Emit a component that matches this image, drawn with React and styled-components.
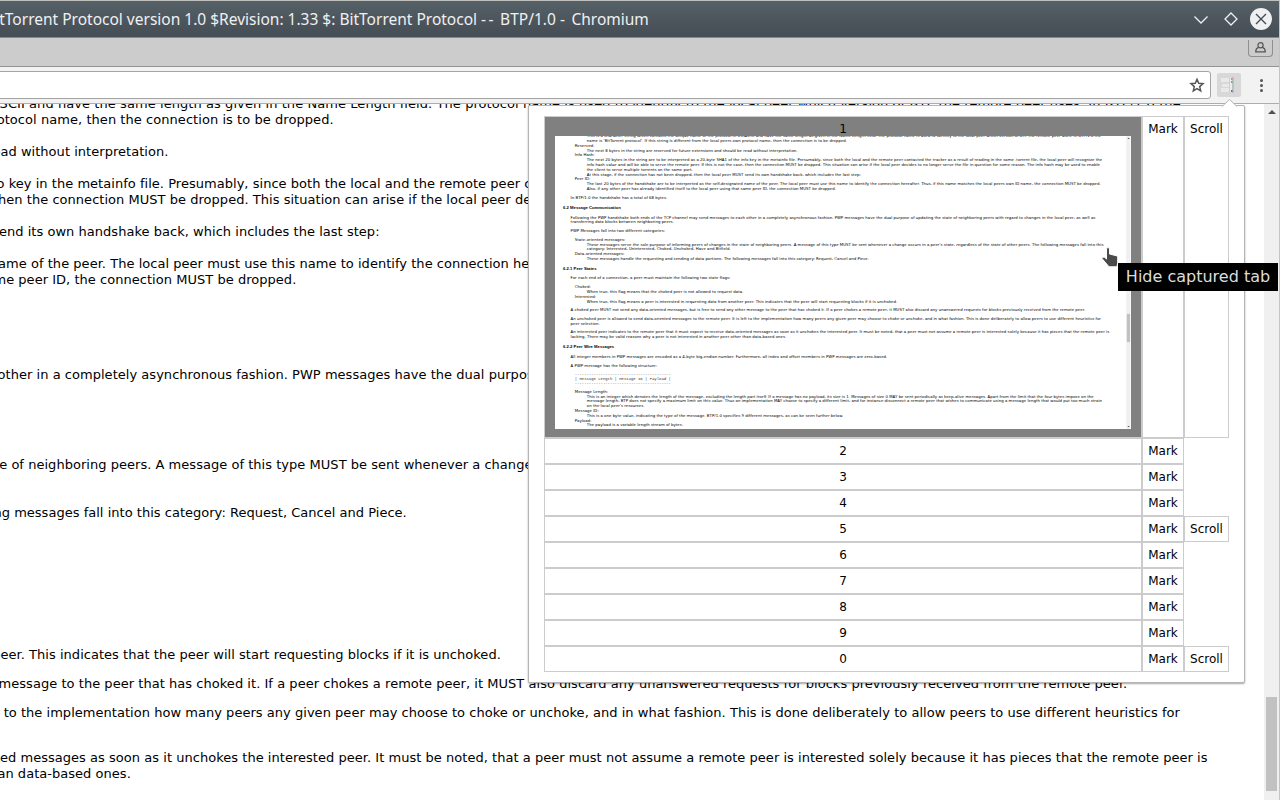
import React from "react";
import styled, { createGlobalStyle } from "styled-components";

const Global = createGlobalStyle`
  body { margin: 0; overflow: hidden; background: #fff; }
  * { box-sizing: border-box; }
`;

/* The desktop shows the right part of a 1920px wide browser window. */
const Screen = styled.div`
  width: 1280px;
  height: 800px;
  overflow: hidden;
  display: flex;
  justify-content: flex-end;
  align-items: flex-start;
  position: relative;
  font-family: "DejaVu Sans", sans-serif;
  color: #000;
`;
const Window = styled.div`
  flex: none;
  width: 1920px;
  height: 1080px;
  display: flex;
  flex-direction: column;
  border-top: 1px solid #c0c0be;
  border-right: 1px solid #c4c4c4;
`;
const TitleBar = styled.header`
  flex: none;
  height: 37px;
  display: flex;
  align-items: center;
  justify-content: center;
  position: relative;
  padding-right: 5px;
  background: linear-gradient(#566067, #454d54);
  border-bottom: 1px solid #3f9fd8;
  color: #eff0f1;
  font: 15.5px "Noto Sans", sans-serif;
  white-space: pre;
`;
const Dashes = styled.span`
  letter-spacing: 2.5px;
`;
const WindowButtons = styled.div`
  position: absolute;
  right: 6px;
  top: 6px;
  display: flex;
  gap: 6px;
`;
const TabStrip = styled.div`
  flex: none;
  height: 29px;
  background: #ccc;
  border-bottom: 1px solid #949494;
  display: flex;
  justify-content: flex-end;
  align-items: flex-start;
  padding: 2px 6px 0 0;
`;
const ProfileButton = styled.div`
  width: 25px;
  height: 17px;
  border: 1px solid #8f8f8f;
  border-top: 0;
  border-radius: 0 0 4px 4px;
  display: flex;
  justify-content: center;
  padding-top: 1px;
`;
const Toolbar = styled.div`
  flex: none;
  height: 37px;
  background: #f2f2f2;
  border-bottom: 1px solid #adadad;
  display: flex;
  align-items: flex-start;
  padding: 4px 11px 0 0;
`;
const AddressField = styled.div`
  flex: 1;
  height: 28px;
  background: #fff;
  border: 1px solid #a4a4a4;
  border-radius: 3px;
  display: flex;
  justify-content: flex-end;
  align-items: center;
  padding-right: 5px;
`;
const ExtensionButton = styled.div`
  width: 24px;
  height: 24px;
  margin: 2px 13px 0 6px;
  background: #d8d8d8;
  border-radius: 2px;
`;
const MenuDots = styled.div`
  width: 14px;
  height: 28px;
  display: flex;
  flex-direction: column;
  align-items: center;
  justify-content: center;
  gap: 2px;
  &::before, &::after { content: ""; }
  &::before, &::after, i { width: 3px; height: 3px; border-radius: 50%; background: #555; }
`;

const PageView = styled.div`
  flex: none;
  width: 1919px;
  height: 976px;
  display: flex;
  overflow: hidden;
  background: #fff;
`;
const Article = styled.div`
  flex: 1;
  min-width: 0;
  margin-top: -8px;
  font: 13px/16px "DejaVu Sans", sans-serif;
  letter-spacing: 0.033px;
  white-space: nowrap;
  p { margin: 13px 0 13px 52px; }
  dl { margin: 13px 0 13px 66px; }
  dl:first-child { margin-top: 0; }
  dd { margin-left: 40px; }
  pre { font: 13px/15px "Liberation Mono", monospace; letter-spacing: 0; margin: 13px 0 13px 66px; color: #333; }
`;
const Heading = styled.h3`
  font: bold 14px/16px "Liberation Sans", sans-serif;
  letter-spacing: 0;
  margin: ${(p) => p.$gap}px 0 ${(p) => p.$gap}px 27px;
`;
const Spaced = styled.span`
  letter-spacing: ${(p) => p.$by}px;
`;
const ScrollTrack = styled.div`
  width: 15px;
  height: 976px;
  background: #f0f0f0;
  display: flex;
  flex-direction: column;
  align-items: center;
  padding: 3px 0 5px 0;
`;
const ScrollThumb = styled.div`
  width: 11px;
  height: 94px;
  margin: 583px 0 auto;
  background: #c1c1c1;
`;
const Arrow = styled.div`
  border: 4px solid transparent;
  ${(p) => (p.$up ? "border-bottom-color: #505050; border-top: 0; margin-top: 3px;" : "border-top-color: #505050; border-bottom: 0;")}
`;

const Popup = styled.div`
  position: absolute;
  left: 528px;
  top: 105px;
  width: 717px;
  height: 578px;
  padding: 10px 15px;
  background: #fff;
  border: 1px solid #b4b4b4;
  border-radius: 2px;
  box-shadow: 0 1px 2px rgba(0, 0, 0, 0.35);
  display: flex;
  flex-direction: column;
  font: 12px/14px "DejaVu Sans", sans-serif;
`;
const PopupArrow = styled.svg`
  position: absolute;
  left: 693px;
  top: -7px;
`;
const Row = styled.div`
  display: flex;
`;
const Cell = styled.div`
  width: ${(p) => p.$w}px;
  border: 1px solid #ccc;
  padding: 5px 0;
  text-align: center;
  background: ${(p) => (p.$active ? "#808080" : "#fff")};
  ${(p) => p.$active && "padding-bottom: 8px;"}
`;
const Capture = styled.div`
  width: 576px;
  height: 293px;
  margin: 0 auto;
  overflow: hidden;
  text-align: left;
  background: #fff;
  ${PageView} { transform: scale(0.3); transform-origin: 0 0; }
`;
const Tooltip = styled.div`
  position: absolute;
  left: 1118px;
  top: 263px;
  width: 160px;
  height: 28px;
  background: #000;
  color: #dcdcdc;
  font: 16px/28px "DejaVu Sans", sans-serif;
  text-align: center;
  white-space: nowrap;
`;
const Pointer = styled.svg`
  position: absolute;
  left: 1101px;
  top: 246px;
`;

const Page = () => (
  <PageView>
    <Article>
      <dl>
        <dd><Spaced $by={0.071}>This is a character string which contains the unique name of the protocol in US-ASCII and have the same length as given in the Name Length field. The protocol name is used to identify to the local peer which version of BTP the remote peer uses. In BTP/1.0 the</Spaced><br />
          <Spaced $by={0.056}>name is 'BitTorrent protocol'. If this string is different from the local peers own protocol name, then the connection is to be dropped.</Spaced></dd>
        <dt>Reserved:</dt>
        <dd>The next 8 bytes in the string are reserved for future extensions and should be read without interpretation.</dd>
        <dt>Info Hash:</dt>
        <dd>The next 20 bytes in the string are to be interpreted as a 20-byte SHA1 of the info key in the metainfo file. Presumably, since both the local and the remote peer contacted the tracker as a result of reading in the same .torrent file, the local peer will recognize the<br />
          info hash value and will be able to serve the remote peer. If this is not the case, then the connection MUST be dropped. This situation can arise if the local peer decides to no longer serve the file in question for some reason. The info hash may be used to enable<br />
          the client to serve multiple torrents on the same port.<br />
          At this stage, if the connection has not been dropped, then the local peer MUST send its own handshake back, which includes the last step:</dd>
        <dt>Peer ID:</dt>
        <dd>The last 20 bytes of the handshake are to be interpreted as the self-designated name of the peer. The local peer must use this name to identify the connection hereafter. Thus, if this name matches the local peers own ID name, the connection MUST be dropped.<br />
          Also, if any other peer has already identified itself to the local peer using that same peer ID, the connection MUST be dropped.</dd>
      </dl>
      <p>In BTP/1.0 the handshake has a total of 68 bytes.</p>
      <Heading $gap={17.2}>6.2 Message Communication</Heading>
      <p>Following the PWP handshake both ends of the TCP channel may send messages to each other in a completely asynchronous fashion. PWP messages have the dual purpose of updating the state of neighboring peers with regard to changes in the local peer, as well as<br />
        transferring data blocks between neighboring peers.</p>
      <p>PWP Messages fall into two different categories:</p>
      <dl>
        <dt>State-oriented messages:</dt>
        <dd>These messages serve the sole purpose of informing peers of changes in the state of neighboring peers. A message of this type MUST be sent whenever a change occurs in a peer's state, regardless of the state of other peers. The following messages fall into this<br />
          category: Interested, Uninterested, Choked, Unchoked, Have and Bitfield.</dd>
        <dt>Data-oriented messages:</dt>
        <dd><Spaced $by={0.02}>These messages handle the requesting and sending of data portions. The following messages fall into this category: Request, Cancel and Piece.</Spaced></dd>
      </dl>
      <Heading $gap={16.3}>6.2.1 Peer States</Heading>
      <p>For each end of a connection, a peer must maintain the following two state flags:</p>
      <dl>
        <dt>Choked:</dt>
        <dd>When true, this flag means that the choked peer is not allowed to request data.</dd>
        <dt>Interested:</dt>
        <dd>When true, this flag means a peer is interested in requesting data from another peer. This indicates that the peer will start requesting blocks if it is unchoked.</dd>
      </dl>
      <p><Spaced $by={0.04}>A choked peer MUST not send any data-oriented messages, but is free to send any other message to the peer that has choked it. If a peer chokes a remote peer, it MUST also discard any unanswered requests for blocks previously received from the remote peer.</Spaced></p>
      <p>An unchoked peer is allowed to send data-oriented messages to the remote peer. It is left to the implementation how many peers any given peer may choose to choke or unchoke, and in what fashion. This is done deliberately to allow peers to use different heuristics for<br />
        peer selection.</p>
      <p>An interested peer indicates to the remote peer that it must expect to receive data-oriented messages as soon as it unchokes the interested peer. It must be noted, that a peer must not assume a remote peer is interested solely because it has pieces that the remote peer is<br />
        lacking. There may be valid reasons why a peer is not interested in another peer other than data-based ones.</p>
      <Heading $gap={17}>6.2.2 Peer Wire Messages</Heading>
      <p>All integer members in PWP messages are encoded as a 4-byte big-endian number. Furthermore, all index and offset members in PWP messages are zero-based.</p>
      <p>A PWP message has the following structure:</p>
      <pre>{"-----------------------------------------\n| Message Length | Message ID | Payload |\n-----------------------------------------"}</pre>
      <dl>
        <dt>Message Length:</dt>
        <dd>This is an integer which denotes the length of the message, excluding the length part itself. If a message has no payload, its size is 1. Messages of size 0 MAY be sent periodically as keep-alive messages. Apart from the limit that the four bytes impose on the<br />
          message length, BTP does not specify a maximum limit on this value. Thus an implementation MAY choose to specify a different limit, and for instance disconnect a remote peer that wishes to communicate using a message length that would put too much strain<br />
          on the local peer's resources.</dd>
        <dt>Message ID:</dt>
        <dd>This is a one byte value, indicating the type of the message. BTP/1.0 specifies 9 different messages, as can be seen further below.</dd>
        <dt>Payload:</dt>
        <dd>The payload is a variable length stream of bytes.</dd>
      </dl>
    </Article>
    <ScrollTrack>
      <Arrow $up />
      <ScrollThumb />
      <Arrow />
    </ScrollTrack>
  </PageView>
);

const tabs = [
  { key: "1", scroll: true, capture: true },
  { key: "2" }, { key: "3" }, { key: "4" },
  { key: "5", scroll: true },
  { key: "6" }, { key: "7" }, { key: "8" }, { key: "9" },
  { key: "0", scroll: true },
];

export default function App() {
  return (
    <Screen>
      <Global />
      <Window>
        <TitleBar>
          <span>BitTorrent Protocol version 1.0 $Revision: 1.33 $: BitTorrent Protocol <Dashes>--</Dashes> BTP/1.0 <Dashes>-</Dashes> Chromium</span>
          <WindowButtons>
            <svg width="24" height="24" fill="none" stroke="#eff0f1" strokeWidth="1.3"><path d="M5.5 9.5l6.5 6.5 6.5-6.5" /></svg>
            <svg width="24" height="24" fill="none" stroke="#eff0f1" strokeWidth="1.3"><path d="M12 6l6 6-6 6-6-6z" /></svg>
            <svg width="24" height="24" fill="none" stroke="#454d54" strokeWidth="1.4"><circle cx="12" cy="12" r="11" fill="#eff0f1" stroke="none" /><path d="M7 7l10 10M17 7L7 17" /></svg>
          </WindowButtons>
        </TitleBar>
        <TabStrip>
          <ProfileButton>
            <svg width="13" height="13" viewBox="0 0 13 13" fill="none" stroke="#555" strokeWidth="1.2"><circle cx="6.5" cy="4.3" r="2.6" /><path d="M4.6 6.4C2.6 7 1.7 8.4 1.7 10.9h9.6c0-2.5-.9-3.9-2.9-4.5" /></svg>
          </ProfileButton>
        </TabStrip>
        <Toolbar>
          <AddressField>
            <svg width="16" height="16" viewBox="0 0 16 16" fill="none" stroke="#555" strokeWidth="1.5"><path d="M8 2.3l1.7 4 4.3.4-3.3 2.9 1 4.3L8 11.6l-3.7 2.3 1-4.3L2 6.700l4.300-.4z" /></svg>
          </AddressField>
          <ExtensionButton>
            <svg width="24" height="24" viewBox="0 0 24 24">
              <path d="M4 5h8v4H4zM5 11h7v3H5zM4 15h8v4H4z" fill="#e9e9e9" />
              <path d="M12.5 5v14" stroke="#cfcfcf" fill="none" />
              <path d="M13 5h2v14h-2z" fill="#ececec" />
              <path d="M16 4v16" stroke="#aaa" fill="none" />
              <path d="M14 5h1.500v2H14z" fill="#d88" /><path d="M14 8h1.500v2H14z" fill="#5b8" /><path d="M14 17h1.500v2H14z" fill="#66b" />
            </svg>
          </ExtensionButton>
          <MenuDots><i /></MenuDots>
        </Toolbar>
        <Page />
      </Window>
      <Popup>
        <PopupArrow width="16" height="8"><path d="M0 7.5L7.5.5l7.5 7" fill="#fff" stroke="#b4b4b4" /></PopupArrow>
        {tabs.map((tab) => (
          <Row key={tab.key}>
            <Cell $w={598} $active={tab.capture}>
              {tab.key}
              {tab.capture && <Capture><Page /></Capture>}
            </Cell>
            <Cell $w={42}>Mark</Cell>
            {tab.scroll && <Cell $w={45}>Scroll</Cell>}
          </Row>
        ))}
      </Popup>
      <Tooltip>Hide captured tab</Tooltip>
      <Pointer width="22" height="23"><path d="M5.500 2.500q1.500-2 3 0v5.500l7 1.800q1.200.5 1.200 2v5l-.7 4H8L1 12.500q.5-2 2.500-1.200l2 1.700z" fill="#4a4a4a" stroke="#fff" /></Pointer>
    </Screen>
  );
}
